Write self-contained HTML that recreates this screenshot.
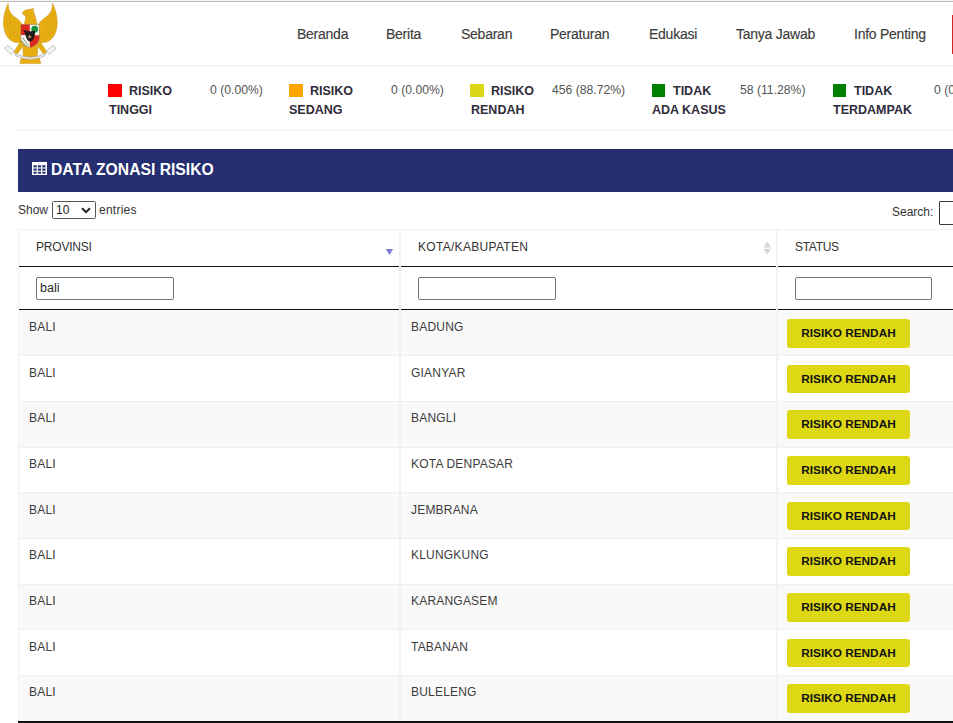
<!DOCTYPE html>
<html><head><meta charset="utf-8">
<style>
*{box-sizing:border-box}
html,body{margin:0;padding:0;background:#fff;width:953px;height:723px;overflow:hidden;position:relative;font-family:"Liberation Sans",sans-serif}
.a{position:absolute;white-space:nowrap}
.topline{position:absolute;left:0;top:1px;width:953px;height:1px;background:#bababa;box-shadow:0 -1px 0 #f6f6f6}
.navline{position:absolute;left:0;top:65px;width:953px;height:1px;background:#f1f1f1;box-shadow:0 1px 0 #f8f8f8,0 3px 3px #fcfcfc}
.nav{position:absolute;top:26px;font-size:14px;color:#3d3d3d;line-height:16px;letter-spacing:-0.25px;-webkit-text-stroke:0.15px #3d3d3d}
.redbtn{position:absolute;left:952px;top:15px;width:1px;height:39px;background:#cf2424}
.stats{position:absolute;left:17px;top:72px;width:940px;height:59px;border-left:1px solid #fafafa;border-bottom:1px solid #efefef}
.sq{position:absolute;width:13.6px;height:13px;top:84px}
.lab{position:absolute;font-weight:bold;font-size:12.5px;color:#302c3c;line-height:19px}
.val{position:absolute;font-size:12.2px;color:#555;top:82px;line-height:16px}
.hdr{position:absolute;left:18px;top:149px;width:935px;height:43px;background:#242e71}
.hdr .t{position:absolute;left:33px;top:11px;font-size:16.8px;font-weight:bold;color:#fff;line-height:20px;transform:scaleX(0.935);transform-origin:0 0}
.sm{font-size:12px;color:#333;line-height:14px}
.cell{position:absolute;font-size:12px;color:#3c3c3c;line-height:14px;letter-spacing:0.2px}
.badge{position:absolute;left:787px;width:123px;height:28.6px;background:#ddd714;border-radius:3px;font-weight:bold;font-size:11.8px;color:#111;line-height:28px;text-align:center}
.row{position:absolute;left:18px;width:935px;border-left:1px solid #eee}
.inp{position:absolute;height:23px;border:1px solid #767676;border-radius:2px;background:#fff}
</style></head><body>
<div class="topline"></div>
<div class="navline"></div>

<!-- logo -->
<svg class="a" style="left:0;top:0" width="64" height="66" viewBox="0 0 64 66">
  
  <g fill="#e7ae12" stroke="#b8890e" stroke-width="0.4">
    <path d="M8.2 3.2 C5.6 8 3.6 15 3.4 22 C3.3 30 6 37 11 40.5 C14 42.5 18 43.2 22 42.5 L22 24 C20 21.5 18 19 15.5 17.6 C12.5 15.8 10 12.5 9 9.5 C8.5 7.5 8.3 5 8.2 3.2 Z"/>
    <path d="M8.2 3.2 C5.6 8 3.6 15 3.4 22 C3.3 30 6 37 11 40.5 C14 42.5 18 43.2 22 42.5 L22 24 C20 21.5 18 19 15.5 17.6 C12.5 15.8 10 12.5 9 9.5 C8.5 7.5 8.3 5 8.2 3.2 Z" transform="translate(60.7 0) scale(-1 1)"/>
    <path d="M22.3 13.2 C23 11 25 9.8 28 9.6 L33.8 8.6 L33.2 11 C34.6 13.5 36 18 37 24.5 L24.3 24.5 C25 21 25.8 18.5 25.6 16.2 C24.6 15.2 23 14.6 22.3 13.2 Z"/>
    <path d="M20.6 41.5 L24.5 44 L17.5 53.8 L13.6 52.2 Z"/>
    <path d="M40.1 41.5 L36.2 44 L43.2 53.8 L47.1 52.2 Z"/>
    <path d="M22.8 45 L37.9 45 L37.4 57 L23.3 57 Z"/>
    <path d="M21.5 57 L39.2 57 L40.8 63.6 L19.9 63.6 Z"/>
  </g>
  <g stroke="#c9951a" stroke-width="0.5" fill="none" opacity="0.7">
    <path d="M7 12 C6 20 7 30 11 37"/><path d="M10 15 C9.5 22 11 31 15 38"/><path d="M14 19 C14 26 15.5 33 19 39"/>
    <path d="M53.7 12 C54.7 20 53.7 30 49.7 37"/><path d="M50.7 15 C51.2 22 49.7 31 45.7 38"/><path d="M46.7 19 C46.7 26 45.2 33 41.7 39"/>
  </g>
  <g fill="#f4f4f4" stroke="#b2b2b2" stroke-width="0.8">
    <path d="M4.6 48.2 L7.6 45.4 L14.4 51 L11.2 54.6 Z"/>
    <path d="M56.1 48.2 L53.1 45.4 L46.3 51 L49.5 54.6 Z"/>
    <path d="M15 53.5 Q30.3 61 45.7 53.5 L44.8 56 Q30.3 62.5 15.9 56 Z"/>
  </g>
  <path d="M21 24.4 L39.4 24.4 L39.5 37 C39.5 42.5 35 46.5 29.7 47.7 C24.5 46.5 20.6 42.5 20.6 37 Z" fill="#f4f4f0" stroke="#8a6a1a" stroke-width="0.5"/>
  <path d="M21 24.6 L29.8 24.6 L29.8 34.9 L20.8 34.9 Z" fill="#d8291f"/>
  <path d="M29.8 35.3 L39.4 35.3 L39.4 37 C39.4 42.5 35 46.3 29.8 47.5 Z" fill="#d8291f"/>
  <circle cx="34.7" cy="29.2" r="3.4" fill="#17923c"/>
  <path d="M22.3 37.5 L28.8 45.8 M21.2 40.5 L26.5 46" stroke="#7f9c70" stroke-width="1"/>
  <path d="M23.2 29.8 C26 30.8 28 31.2 30 31.4 C32 31.2 33.5 30.8 35 30.6 C35.2 33 34.8 36.5 33.5 39 C32.3 40.8 31 41.5 29.8 41.6 C28.3 41.2 27 39.8 26.2 37.5 C25.5 35 24.5 32 23.2 29.8 Z" fill="#1d1a17"/>
  <path d="M29.7 33.8 L30.5 35.9 L32.7 36 L31 37.3 L31.6 39.4 L29.7 38.2 L27.8 39.4 L28.4 37.3 L26.7 36 L28.9 35.9 Z" fill="#a48a62" transform="translate(29.7 36.6) scale(0.8) translate(-29.7 -36.6)"/>
</svg>

<div class="redbtn"></div>

<!-- nav -->
<div class="nav" style="left:297px">Beranda</div>
<div class="nav" style="left:386px">Berita</div>
<div class="nav" style="left:461px">Sebaran</div>
<div class="nav" style="left:550px">Peraturan</div>
<div class="nav" style="left:649px">Edukasi</div>
<div class="nav" style="left:736px">Tanya Jawab</div>
<div class="nav" style="left:854px">Info Penting</div>

<!-- stats -->
<div class="stats"></div>
<div class="sq" style="left:108px;background:#ff0000"></div>
<div class="lab a" style="left:129px;top:82px">RISIKO</div>
<div class="lab a" style="left:109px;top:101px">TINGGI</div>
<div class="val a" style="left:210px">0 (0.00%)</div>

<div class="sq" style="left:289.2px;background:#ffa500"></div>
<div class="lab a" style="left:310px;top:82px">RISIKO</div>
<div class="lab a" style="left:289px;top:101px">SEDANG</div>
<div class="val a" style="left:391px">0 (0.00%)</div>

<div class="sq" style="left:470.4px;background:#ddd614"></div>
<div class="lab a" style="left:491px;top:82px">RISIKO</div>
<div class="lab a" style="left:471px;top:101px">RENDAH</div>
<div class="val a" style="left:552px">456 (88.72%)</div>

<div class="sq" style="left:651.7px;background:#008000"></div>
<div class="lab a" style="left:673px;top:82px">TIDAK</div>
<div class="lab a" style="left:652px;top:101px">ADA KASUS</div>
<div class="val a" style="left:740px">58 (11.28%)</div>

<div class="sq" style="left:832.9px;background:#008000"></div>
<div class="lab a" style="left:854px;top:82px">TIDAK</div>
<div class="lab a" style="left:833px;top:101px">TERDAMPAK</div>
<div class="val a" style="left:934px">0 (0.00%)</div>

<!-- header -->
<div class="hdr">
  <svg class="a" style="left:14px;top:13px" width="15" height="13" viewBox="0 0 15 12" preserveAspectRatio="none">
    <rect x="0" y="0" width="15" height="12" fill="#fff"/>
    <g fill="#242e71">
      <rect x="1.5" y="3" width="3.2" height="2"/><rect x="5.9" y="3" width="3.2" height="2"/><rect x="10.3" y="3" width="3.2" height="2"/>
      <rect x="1.5" y="6" width="3.2" height="2"/><rect x="5.9" y="6" width="3.2" height="2"/><rect x="10.3" y="6" width="3.2" height="2"/>
      <rect x="1.5" y="9" width="3.2" height="1.8"/><rect x="5.9" y="9" width="3.2" height="1.8"/><rect x="10.3" y="9" width="3.2" height="1.8"/>
    </g>
  </svg>
  <div class="t">DATA ZONASI RISIKO</div>
</div>

<!-- show entries -->
<div class="a sm" style="left:18px;top:203px">Show</div>
<div class="a" style="left:52px;top:201px;width:44px;height:18px;border:1px solid #585858;border-radius:1.5px;background:#fff">
  <span class="a" style="left:3px;top:1px;font-size:12px;color:#222;line-height:14px">10</span>
  <svg class="a" style="left:27.5px;top:4.5px" width="10" height="7" viewBox="0 0 10 7"><path d="M1 1.2 L5 5.2 L9 1.2" fill="none" stroke="#222" stroke-width="2"/></svg>
</div>
<div class="a sm" style="left:99px;top:203px;letter-spacing:0.25px">entries</div>
<div class="a sm" style="left:892px;top:205px">Search:</div>
<div class="inp" style="left:939px;top:201px;width:40px;height:24px;border-color:#3a3a3a;border-radius:1px"></div>

<!-- table -->
<div class="a" style="left:18px;top:229px;width:935px;height:1px;background:#f1f1f1"></div>
<div class="a sm" style="left:36px;top:240px;letter-spacing:-0.2px">PROVINSI</div>
<div class="a sm" style="left:418px;top:240px;letter-spacing:0.3px">KOTA/KABUPATEN</div>
<div class="a sm" style="left:795px;top:240px;letter-spacing:-0.3px">STATUS</div>
<svg class="a" style="left:385px;top:249px" width="9" height="7" viewBox="0 0 9 7"><path d="M0.8 0 L8.1 0 L4.45 6Z" fill="#7c7cd8"/></svg>
<svg class="a" style="left:763px;top:240px" width="9" height="16" viewBox="0 0 9 16"><path d="M0.5 7.5 L8 7.5 L4.25 1.3Z M0.5 8.8 L8 8.8 L4.25 14.8Z" fill="#d6d6d6"/></svg>
<div class="a" style="left:19px;top:266px;width:934px;height:1px;background:#111"></div>
<div class="inp" style="left:36px;top:277px;width:138px"><span class="a" style="left:3px;top:3px;font-size:12.5px;color:#2a2a2a;line-height:14px">bali</span></div>
<div class="inp" style="left:418px;top:277px;width:138px"></div>
<div class="inp" style="left:795px;top:277px;width:137px"></div>
<div class="a" style="left:19px;top:309px;width:934px;height:1px;background:#111"></div>

<div class="a" style="left:19px;top:310.00px;width:934px;height:45.67px;background:#f9f9f9"></div>
<div class="cell" style="left:29px;top:320.00px">BALI</div>
<div class="cell" style="left:411px;top:320.00px">BADUNG</div>
<div class="badge" style="top:319.00px">RISIKO RENDAH</div>
<div class="a" style="left:19px;top:355.67px;width:934px;height:45.67px;background:#fff"></div>
<div class="a" style="left:19px;top:355.27px;width:934px;height:1px;background:#f0f0f0"></div>
<div class="cell" style="left:29px;top:365.67px">BALI</div>
<div class="cell" style="left:411px;top:365.67px">GIANYAR</div>
<div class="badge" style="top:364.67px">RISIKO RENDAH</div>
<div class="a" style="left:19px;top:401.33px;width:934px;height:45.67px;background:#f9f9f9"></div>
<div class="a" style="left:19px;top:400.93px;width:934px;height:1px;background:#f0f0f0"></div>
<div class="cell" style="left:29px;top:411.33px">BALI</div>
<div class="cell" style="left:411px;top:411.33px">BANGLI</div>
<div class="badge" style="top:410.33px">RISIKO RENDAH</div>
<div class="a" style="left:19px;top:447.00px;width:934px;height:45.67px;background:#fff"></div>
<div class="a" style="left:19px;top:446.60px;width:934px;height:1px;background:#f0f0f0"></div>
<div class="cell" style="left:29px;top:457.00px">BALI</div>
<div class="cell" style="left:411px;top:457.00px">KOTA DENPASAR</div>
<div class="badge" style="top:456.00px">RISIKO RENDAH</div>
<div class="a" style="left:19px;top:492.67px;width:934px;height:45.67px;background:#f9f9f9"></div>
<div class="a" style="left:19px;top:492.27px;width:934px;height:1px;background:#f0f0f0"></div>
<div class="cell" style="left:29px;top:502.67px">BALI</div>
<div class="cell" style="left:411px;top:502.67px">JEMBRANA</div>
<div class="badge" style="top:501.67px">RISIKO RENDAH</div>
<div class="a" style="left:19px;top:538.34px;width:934px;height:45.67px;background:#fff"></div>
<div class="a" style="left:19px;top:537.94px;width:934px;height:1px;background:#f0f0f0"></div>
<div class="cell" style="left:29px;top:548.34px">BALI</div>
<div class="cell" style="left:411px;top:548.34px">KLUNGKUNG</div>
<div class="badge" style="top:547.34px">RISIKO RENDAH</div>
<div class="a" style="left:19px;top:584.00px;width:934px;height:45.67px;background:#f9f9f9"></div>
<div class="a" style="left:19px;top:583.60px;width:934px;height:1px;background:#f0f0f0"></div>
<div class="cell" style="left:29px;top:594.00px">BALI</div>
<div class="cell" style="left:411px;top:594.00px">KARANGASEM</div>
<div class="badge" style="top:593.00px">RISIKO RENDAH</div>
<div class="a" style="left:19px;top:629.67px;width:934px;height:45.67px;background:#fff"></div>
<div class="a" style="left:19px;top:629.27px;width:934px;height:1px;background:#f0f0f0"></div>
<div class="cell" style="left:29px;top:639.67px">BALI</div>
<div class="cell" style="left:411px;top:639.67px">TABANAN</div>
<div class="badge" style="top:638.67px">RISIKO RENDAH</div>
<div class="a" style="left:19px;top:675.34px;width:934px;height:45.67px;background:#f9f9f9"></div>
<div class="a" style="left:19px;top:674.94px;width:934px;height:1px;background:#f0f0f0"></div>
<div class="cell" style="left:29px;top:685.34px">BALI</div>
<div class="cell" style="left:411px;top:685.34px">BULELENG</div>
<div class="badge" style="top:684.34px">RISIKO RENDAH</div>
<div class="a" style="left:18px;top:229px;width:1px;height:492px;background:#f1f1f1"></div>
<div class="a" style="left:399px;top:229px;width:2px;height:492px;background:#f2f2f2"></div>
<div class="a" style="left:776px;top:229px;width:2px;height:492px;background:#f2f2f2"></div>
<div class="a" style="left:18px;top:721px;width:935px;height:2px;background:#111"></div>
</body></html>
